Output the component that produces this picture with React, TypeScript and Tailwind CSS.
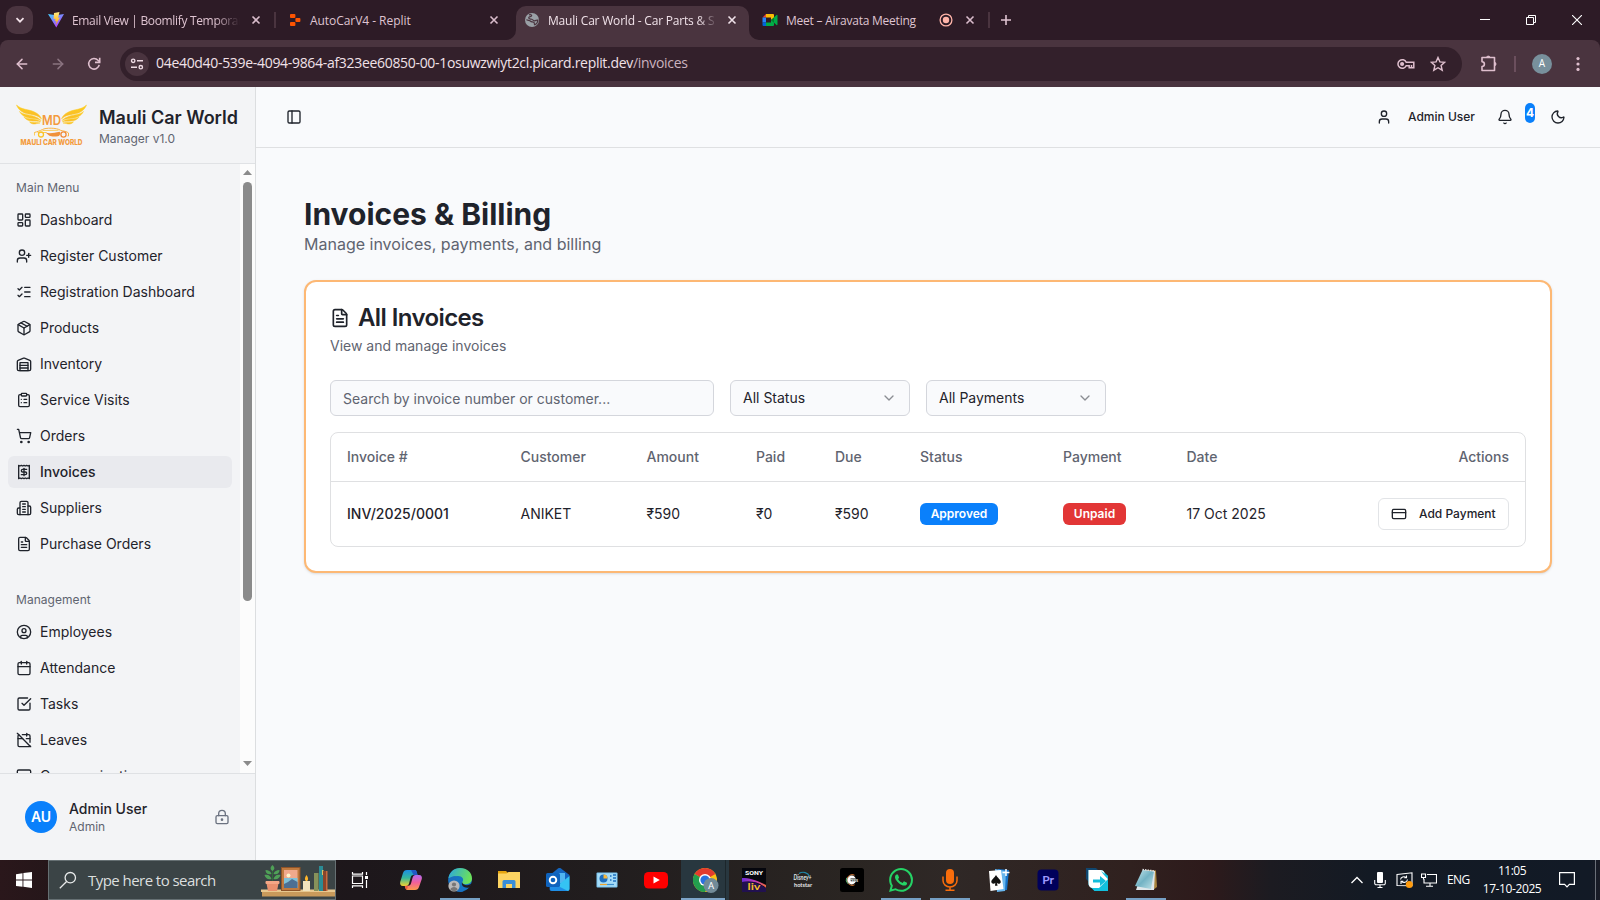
import type { ReactNode } from "react";
import {
  ArrowLeft,
  ArrowRight,
  Bell,
  Calendar,
  CalendarOff,
  ChevronDown,
  ClipboardList,
  CreditCard,
  FileText,
  LayoutDashboard,
  ListChecks,
  LockKeyhole,
  MessageSquare,
  Moon,
  Package,
  PanelLeft,
  ShoppingCart,
  SquareCheckBig,
  User,
  UserPlus,
} from "lucide-react";

/* ---------- shared ---------- */

function Stroke({ children, className = "size-4", width = 2 }: { children: ReactNode; className?: string; width?: number }) {
  return (
    <svg
      viewBox="0 0 24 24"
      fill="none"
      stroke="currentColor"
      strokeWidth={width}
      strokeLinecap="round"
      strokeLinejoin="round"
      className={`shrink-0 ${className}`}
    >
      {children}
    </svg>
  );
}

const WarehouseIcon = () => (
  <Stroke>
    <path d="M22 8.35V20a2 2 0 0 1-2 2H4a2 2 0 0 1-2-2V8.35A2 2 0 0 1 3.26 6.5l8-3.2a2 2 0 0 1 1.48 0l8 3.2A2 2 0 0 1 22 8.35Z" />
    <path d="M6 18h12" />
    <path d="M6 14h12" />
    <rect width="12" height="12" x="6" y="10" />
  </Stroke>
);

const BuildingIcon = () => (
  <Stroke>
    <path d="M6 22V4a2 2 0 0 1 2-2h8a2 2 0 0 1 2 2v18Z" />
    <path d="M6 12H4a2 2 0 0 0-2 2v6a2 2 0 0 0 2 2h2" />
    <path d="M18 9h2a2 2 0 0 1 2 2v9a2 2 0 0 1-2 2h-2" />
    <path d="M10 6h4M10 10h4M10 14h4M10 18h4" />
  </Stroke>
);

const ReceiptIcon = () => (
  <Stroke>
    <path d="M4 2v20l2-1 2 1 2-1 2 1 2-1 2 1 2-1 2 1V2l-2 1-2-1-2 1-2-1-2 1-2-1-2 1Z" />
    <path d="M16 8h-6a2 2 0 1 0 0 4h4a2 2 0 1 1 0 4H8" />
    <path d="M12 17.5v-11" />
  </Stroke>
);

const EmployeeIcon = () => (
  <Stroke>
    <circle cx="12" cy="12" r="10" />
    <circle cx="12" cy="10" r="3" />
    <path d="M7 20.662V19a2 2 0 0 1 2-2h6a2 2 0 0 1 2 2v1.662" />
  </Stroke>
);

/* ---------- browser window ---------- */

function CloseX({ bright = false }: { bright?: boolean }) {
  return (
    <svg viewBox="0 0 12 12" className={bright ? "size-3 shrink-0 text-[#f0e2e9]" : "size-3 shrink-0 text-[#d9bccb]"}>
      <path d="M2.5 2.5l7 7M9.5 2.5l-7 7" stroke="currentColor" strokeWidth="1.6" fill="none" />
    </svg>
  );
}

const ViteIcon = () => (
  <svg viewBox="0 0 16 16" className="size-4 shrink-0">
    <defs>
      <linearGradient id="vite" x1="0" y1="0" x2="0.7" y2="1">
        <stop offset="0" stopColor="#41d1ff" />
        <stop offset="1" stopColor="#bd34fe" />
      </linearGradient>
      <linearGradient id="bolt" x1="0" y1="0" x2="0" y2="1">
        <stop offset="0" stopColor="#ffea83" />
        <stop offset="1" stopColor="#ffa800" />
      </linearGradient>
    </defs>
    <path d="M0 2l8 1.2L16 2 8.3 15.6z" fill="url(#vite)" />
    <path d="M11.5 0L6 1.1 5.6 7l1.9-.3-.6 2.6 1.6-.4-.9 4L12 5.4l-1.9.3z" fill="url(#bolt)" />
  </svg>
);

const ReplitIcon = () => (
  <svg viewBox="0 0 16 16" className="size-4 shrink-0" fill="#fd5402">
    <rect x="3" y="2" width="5.4" height="4" rx="0.9" />
    <rect x="8.4" y="6" width="5" height="4" rx="0.9" />
    <rect x="3" y="10" width="5.4" height="4" rx="0.9" />
  </svg>
);

const GlobeIcon = () => (
  <svg viewBox="0 0 16 16" className="size-4 shrink-0">
    <circle cx="8" cy="8" r="7" fill="#9aa0a6" />
    <path d="M5 2.9c2.300-.6 3.200.3 2.300 1.200-.7.8-2.600.3-2.600 1.700 0 1.400 1.700 1.100 3 1.500 1.600.5 1.300 1.700 3 1.500 1.300-.1 1.700-1 3.200-.8-.1 2.300-1.500 4-3.200 4.800-.8-.9.100-2-.9-2.600-1.200-.7-2.700 0-3.300-1.100C5.800 7.900 3.600 8.700 2.400 7.600" fill="none" stroke="#4a343f" strokeWidth="1.200" />
  </svg>
);

const MeetIcon = () => (
  <svg viewBox="0 0 16 16" className="size-4 shrink-0">
    <path d="M.5 5.500 4 2v3.500z" fill="#ea4335" />
    <path d="M4 2h7a1 1 0 0 1 1 1v3.200L9 8V5.500H4z" fill="#fbbc04" />
    <path d="M.5 5.500H4v5H.5z" fill="#2684fc" />
    <path d="M.5 10.500H4V14H1.500a1 1 0 0 1-1-1z" fill="#0066da" />
    <path d="M4 10.500h5V8l3 2.500V13a1 1 0 0 1-1 1H4z" fill="#00ac47" />
    <path d="M9 8l5.500-5c.5-.4 1-.1 1 .5v9c0 .6-.5.9-1 .5z" fill="#00ac47" />
    <path d="M9 8l3-2.600v5.200z" fill="#00832d" />
  </svg>
);

function TabStrip() {
  return (
    <div className="flex h-10 w-full items-center bg-[#2d1b26] text-[12px] text-[#dfc4d1]">
      <div className="ml-[6px] flex h-7 w-[27px] items-center justify-center rounded-[10px] bg-[#4a343f]">
        <svg viewBox="0 0 10 10" className="size-[10px]">
          <path d="M1.500 3.200 5 6.700l3.500-3.500" fill="none" stroke="#f3e3ea" strokeWidth="1.700" />
        </svg>
      </div>
      <div className="flex w-[241px] items-center pl-[15px] pr-3">
        <ViteIcon />
        <span className="ml-2 w-[168px] whitespace-nowrap pt-[2px] tracking-[-0.330px] [mask-image:linear-gradient(to_right,black_85%,transparent)]">
          Email View | Boomlify Temporar
        </span>
        <span className="ml-auto flex"><CloseX /></span>
      </div>
      <div className="h-4 w-[2px] bg-[#4a343f]" />
      <div className="flex w-[240px] items-center pl-[11px] pr-4">
        <ReplitIcon />
        <span className="ml-[7px] whitespace-nowrap pt-[2px] tracking-[-0.050px]">AutoCarV4 - Replit</span>
        <span className="ml-auto flex"><CloseX /></span>
      </div>
      <div className="relative mt-[6px] flex h-[34px] w-[233px] items-center rounded-t-[10px] bg-[#4a343f] pb-[6px] pl-2 pr-[11px] text-[#f0e2e9]">
        <svg viewBox="0 0 10 10" className="absolute -left-[10px] bottom-0 size-[10px]">
          <path d="M10 0v10H0A10 10 0 0 0 10 0z" fill="#4a343f" />
        </svg>
        <svg viewBox="0 0 10 10" className="absolute -right-[10px] bottom-0 size-[10px]">
          <path d="M0 0v10h10A10 10 0 0 1 0 0z" fill="#4a343f" />
        </svg>
        <GlobeIcon />
        <span className="ml-2 w-[170px] whitespace-nowrap pt-[2px] tracking-[-0.200px] [mask-image:linear-gradient(to_right,black_88%,transparent)]">
          Mauli Car World - Car Parts &amp; S
        </span>
        <span className="ml-auto flex"><CloseX bright /></span>
      </div>
      <div className="flex w-[239px] items-center pl-[13px] pr-3">
        <MeetIcon />
        <span className="ml-[8px] whitespace-nowrap pt-[2px] tracking-[-0.230px]">Meet – Airavata Meeting</span>
        <svg viewBox="0 0 14 14" className="ml-auto size-[14px]">
          <circle cx="7" cy="7" r="5.900" fill="none" stroke="#ffb4a9" strokeWidth="1.300" />
          <circle cx="7" cy="7" r="3.200" fill="#ffb4a9" />
        </svg>
        <span className="ml-[11px] flex"><CloseX /></span>
      </div>
      <div className="h-4 w-[2px] bg-[#4a343f]" />
      <svg viewBox="0 0 12 12" className="ml-[10px] size-3">
        <path d="M6 1v10M1 6h10" stroke="#dfc4d1" strokeWidth="1.600" />
      </svg>
      <div className="ml-auto flex">
        <div className="flex w-[46px] items-center justify-center">
          <svg viewBox="0 0 10 10" className="size-[10px]"><path d="M0 4.500h10" stroke="#fff" /></svg>
        </div>
        <div className="flex w-[46px] items-center justify-center">
          <svg viewBox="0 0 10 10" className="size-[10px]" fill="none" stroke="#fff">
            <path d="M.5 2.500h7v7h-7z" />
            <path d="M2.500 2.500v-2h7v7h-2" />
          </svg>
        </div>
        <div className="flex w-[46px] items-center justify-center">
          <svg viewBox="0 0 10 10" className="size-[10px]"><path d="M0 0l10 10M10 0L0 10" stroke="#fff" strokeWidth="1.100" /></svg>
        </div>
      </div>
    </div>
  );
}

function Toolbar() {
  return (
    <div className="bg-[#2d1b26]">
      <div className="flex h-[47px] items-center rounded-t-lg bg-[#4a343f] text-[#dfbfce]">
        <ArrowLeft className="ml-[14px] size-4" strokeWidth={2.300} />
        <ArrowRight className="ml-5 size-4 text-[#8b7480]" strokeWidth={2.300} />
        <svg viewBox="0 0 16 16" className="ml-5 size-4" fill="none" stroke="currentColor" strokeWidth="1.600">
          <path d="M13.200 8.800A5.300 5.300 0 1 1 12 4.300L13.800 6" />
          <path d="M13.700 1.700v4.700H9" />
        </svg>
        <div className="ml-[18px] flex h-[34px] w-[1342px] items-center rounded-full bg-[#33202b] pl-[5px] pr-4">
          <div className="flex size-6 items-center justify-center rounded-full bg-[#4a343f]">
            <svg viewBox="0 0 14 14" className="size-[14px]" fill="none" stroke="#efdbe4" strokeWidth="1.400">
              <circle cx="3.200" cy="3.800" r="1.700" />
              <path d="M7 3.800h6M1 10.200h6" />
              <circle cx="10.800" cy="10.200" r="1.700" />
            </svg>
          </div>
          <span className="ml-[7px] whitespace-nowrap pb-[2px] text-[14px] tracking-[-0.310px] text-[#f1e1e8]">
            04e40d40-539e-4094-9864-af323ee60850-00-1osuwzwiyt2cl.picard.replit.dev
            <span className="text-[#cbb3bf]">/invoices</span>
          </span>
          <svg viewBox="0 0 18 12" className="ml-auto h-3 w-[18px]" fill="none" stroke="currentColor" strokeWidth="1.500">
            <path d="M9.200 4.300A4.300 4.300 0 1 0 9.200 7.700h3v2h4.600V4.300z" />
            <circle cx="5.100" cy="6" r="1.300" fill="currentColor" />
            <path d="M14.500 9.700V7" />
          </svg>
          <svg viewBox="0 0 16 16" className="ml-[15px] size-4" fill="none" stroke="currentColor" strokeWidth="1.400">
            <path d="M8 1.500l1.900 4.400 4.800.4-3.600 3.200 1.100 4.700L8 11.700l-4.200 2.500 1.100-4.700L1.300 6.300l4.800-.4z" />
          </svg>
        </div>
        <svg viewBox="0 0 18 18" className="ml-[18px] size-[18px]" fill="none" stroke="currentColor" strokeWidth="1.600">
          <path d="M2 2.500h12.500v13H2v-4a2.300 2.300 0 0 0 0-4.800z" strokeLinejoin="round" />
          <path d="M6.500 2.200a1.900 1.700 0 0 1 3.600 0zM14.800 7.200a1.800 1.900 0 0 1 0 3.600z" fill="currentColor" strokeWidth="0.800" />
        </svg>
        <div className="ml-4 h-4 w-[2px] bg-[#6b4f5d]" />
        <div className="ml-4 flex size-5 items-center justify-center rounded-full bg-[#78909c] text-[10px] text-white">A</div>
        <svg viewBox="0 0 4 16" className="ml-6 h-4 w-1" fill="currentColor">
          <circle cx="2" cy="2.600" r="1.600" />
          <circle cx="2" cy="8" r="1.600" />
          <circle cx="2" cy="13.400" r="1.600" />
        </svg>
      </div>
    </div>
  );
}

/* ---------- application sidebar ---------- */

const Wing = () => (
  <>
    <path d="M0 1c5 5 12 4 18 7 4 2 6 4 7 7-4-4-8-4-13-5C6 9 2 6 0 1z" />
    <path d="M3 7.500c4 3.500 9 3 13.500 4.500 4 1.300 6.500 2.500 8 4.500-4-2-7-1.800-11.500-2.500C8.500 13.300 5 11.500 3 7.500z" />
    <path d="M7.500 13.200c3.500 1.800 7 1.500 10.500 2 3 .5 4.800 1.200 6.200 2.600-3-.8-5.500-.3-8.800-.7-3.500-.5-6-1.500-7.900-3.900z" />
    <path d="M13 17.800c3 1 6 .3 10.500 1.200-3 .2-4.500 1.200-6.500 1-2-.2-3.200-1-4-2.200z" />
  </>
);

function Logo() {
  return (
    <svg viewBox="0 0 70 42" className="h-[42px] w-[71px] shrink-0 overflow-visible">
      <defs>
        <linearGradient id="wing" x1="0" y1="0" x2="0" y2="1">
          <stop offset="0" stopColor="#fcd21c" />
          <stop offset="1" stopColor="#f9b42c" />
        </linearGradient>
      </defs>
      <g fill="url(#wing)" stroke="#fcc927" strokeWidth="0.500"><Wing /></g>
      <g fill="url(#wing)" stroke="#fcc927" strokeWidth="0.500" transform="translate(70 0) scale(-1 1)"><Wing /></g>
      <text x="35" y="20.500" textAnchor="middle" fontFamily="Inter, sans-serif" fontSize="12.500" fontWeight="600" fill="#f39a3d" textLength="19" lengthAdjust="spacingAndGlyphs">MD</text>
      <path d="M18 28.500c3-1 5-1.500 8-3 3-1.800 14-2 18 .8 3 .9 6.500 1 8 2.700v3h-1" fill="none" stroke="#f9b447" strokeWidth="1" />
      <path d="M18 28v3.500M21 28.500h9M26 26.500l16-.2" fill="none" stroke="#fbc84f" strokeWidth="0.900" />
      <circle cx="24.500" cy="30.500" r="2.500" fill="none" stroke="#fbc424" strokeWidth="1.300" />
      <circle cx="47" cy="30.500" r="2.600" fill="none" stroke="#ef8b3a" strokeWidth="1.300" />
      <path d="M29 28.500c5 1.500 9 0 14-.8 1.500 1 .8 4-1.500 4.500-4 .8-7 .3-9-.8z" fill="#f0913a" />
      <text x="35" y="40.500" textAnchor="middle" fontFamily="Inter, sans-serif" fontSize="7.800" fontWeight="800" fill="#f49b3c" textLength="62" lengthAdjust="spacingAndGlyphs">MAULI CAR WORLD</text>
    </svg>
  );
}

function NavItem({ icon, label, active = false }: { icon: ReactNode; label: string; active?: boolean }) {
  return (
    <div className={`flex h-8 shrink-0 items-center gap-2 rounded-md px-2 text-sm ${active ? "bg-[#e9eaee] font-medium" : ""}`}>
      {icon}
      <span className="whitespace-nowrap">{label}</span>
    </div>
  );
}

function NavGroup({ title, children }: { title: string; children: ReactNode }) {
  return (
    <div className="flex flex-col p-2">
      <div className="flex h-8 items-center px-2 text-xs tracking-[0.050px] text-[#5f6470]">{title}</div>
      <div className="flex flex-col gap-1">{children}</div>
    </div>
  );
}

function Sidebar() {
  return (
    <aside className="flex w-64 shrink-0 flex-col border-r border-[#dcdee0] bg-[#f3f4f6]">
      <div className="flex h-[77px] shrink-0 items-center gap-3 border-b border-[#e0e2e5] px-4">
        <Logo />
        <div className="whitespace-nowrap">
          <div className="text-lg font-semibold leading-7">Mauli Car World</div>
          <div className="-mt-[1px] text-xs text-[#5f6470]">Manager v1.0</div>
        </div>
      </div>
      <div className="flex h-[609px] shrink-0">
        <div className="flex h-full w-60 flex-col gap-2 overflow-hidden">
          <NavGroup title="Main Menu">
            <NavItem icon={<LayoutDashboard className="size-4" />} label="Dashboard" />
            <NavItem icon={<UserPlus className="size-4" />} label="Register Customer" />
            <NavItem icon={<ListChecks className="size-4" />} label="Registration Dashboard" />
            <NavItem icon={<Package className="size-4" />} label="Products" />
            <NavItem icon={<WarehouseIcon />} label="Inventory" />
            <NavItem icon={<ClipboardList className="size-4" />} label="Service Visits" />
            <NavItem icon={<ShoppingCart className="size-4" />} label="Orders" />
            <NavItem icon={<ReceiptIcon />} label="Invoices" active />
            <NavItem icon={<BuildingIcon />} label="Suppliers" />
            <NavItem icon={<FileText className="size-4" />} label="Purchase Orders" />
          </NavGroup>
          <NavGroup title="Management">
            <NavItem icon={<EmployeeIcon />} label="Employees" />
            <NavItem icon={<Calendar className="size-4" />} label="Attendance" />
            <NavItem icon={<SquareCheckBig className="size-4" />} label="Tasks" />
            <NavItem icon={<CalendarOff className="size-4" />} label="Leaves" />
            <NavItem icon={<MessageSquare className="size-4" />} label="Communication" />
          </NavGroup>
        </div>
        <div className="flex h-full w-[15px] flex-col items-center bg-[#fcfcfc] pb-[7px] pt-[6px]">
          <svg viewBox="0 0 9 5" className="h-[5px] w-[9px]" fill="#8b8b8b"><path d="M4.500 0 9 5H0z" /></svg>
          <div className="mt-[7px] h-[419px] w-[9px] rounded-full bg-[#8b8b8b]" />
          <svg viewBox="0 0 9 5" className="mt-auto h-[5px] w-[9px]" fill="#8b8b8b"><path d="M4.500 5 9 0H0z" /></svg>
        </div>
      </div>
      <div className="flex flex-1 items-center border-t border-[#dfe1e4] pl-[25px] pr-[25px]">
        <div className="flex size-8 items-center justify-center rounded-full bg-[#0a80fb] text-sm font-semibold text-white">AU</div>
        <div className="ml-3 pt-[2px]">
          <div className="text-sm font-medium leading-[18px]">Admin User</div>
          <div className="text-xs leading-[18px] text-[#5f6470]">Admin</div>
        </div>
        <LockKeyhole className="ml-auto size-4 text-[#6b7280]" />
      </div>
    </aside>
  );
}

/* ---------- invoices page ---------- */

function SelectBox({ label }: { label: string }) {
  return (
    <div className="flex h-9 w-[180px] items-center justify-between rounded-md border border-[#d4d6dc] bg-[#f9fafc] px-3 text-sm">
      <span>{label}</span>
      <ChevronDown className="size-4 opacity-50" />
    </div>
  );
}

function Badge({ children, tone }: { children: ReactNode; tone: "blue" | "red" }) {
  return (
    <span
      className={`flex h-[22px] items-center justify-center rounded-md text-xs font-semibold text-white ${
        tone === "blue" ? "w-[78px] bg-[#0a80fb]" : "w-[63px] bg-[#e23636]"
      }`}
    >
      {children}
    </span>
  );
}

function InvoiceTable() {
  return (
    <div className="mt-4 h-[115px] rounded-lg border border-[#dfe0e2]">
      <table className="w-full table-fixed border-separate border-spacing-0 text-left text-sm">
        <colgroup>
          <col className="w-[173.5px]" />
          <col className="w-[126px]" />
          <col className="w-[109.5px]" />
          <col className="w-[79px]" />
          <col className="w-[85px]" />
          <col className="w-[143px]" />
          <col className="w-[123.5px]" />
          <col />
          <col className="w-[180px]" />
        </colgroup>
        <thead>
          <tr className="text-[#5f6470]">
            {["Invoice #", "Customer", "Amount", "Paid", "Due", "Status", "Payment", "Date"].map((h) => (
              <th key={h} className="h-[49px] border-b border-[#dfe0e2] px-4 py-0 font-medium">{h}</th>
            ))}
            <th className="h-[49px] border-b border-[#dfe0e2] px-4 py-0 text-right font-medium">Actions</th>
          </tr>
        </thead>
        <tbody>
          <tr className="h-16">
            <td className="px-4 font-medium">INV/2025/0001</td>
            <td className="px-4">ANIKET</td>
            <td className="px-4">₹590</td>
            <td className="px-4">₹0</td>
            <td className="px-4">₹590</td>
            <td className="px-4"><Badge tone="blue">Approved</Badge></td>
            <td className="px-4"><Badge tone="red">Unpaid</Badge></td>
            <td className="px-4">17 Oct 2025</td>
            <td className="px-4">
              <div className="flex justify-end">
                <button className="flex h-8 w-[131px] items-center gap-3 whitespace-nowrap rounded-md border border-[#e2e4e7] px-3 text-xs font-medium">
                  <CreditCard className="size-4 shrink-0" />
                  Add Payment
                </button>
              </div>
            </td>
          </tr>
        </tbody>
      </table>
    </div>
  );
}

function Main() {
  return (
    <main className="flex flex-1 flex-col bg-[#f9fafc]">
      <header className="flex h-[61px] shrink-0 items-center border-b border-[#dfe0e2] pl-[30px] pr-[34px]">
        <PanelLeft className="size-4" />
        <User className="ml-auto size-4" />
        <span className="ml-4 w-[67px] whitespace-nowrap text-xs font-medium">Admin User</span>
        <Bell className="ml-[22px] size-4" />
        <span className="mb-2 ml-3 flex h-5 w-[10px] items-center justify-center rounded-full bg-[#0a80fb] pb-px text-xs font-bold text-white">4</span>
        <Moon className="ml-[15px] size-4" />
      </header>
      <div className="p-12">
        <h1 className="text-3xl font-bold leading-9">Invoices &amp; Billing</h1>
        <p className="text-base text-[#5f6470]">Manage invoices, payments, and billing</p>
        <section className="mt-6 h-[293px] rounded-xl border-2 border-[#fdb874] bg-white p-6 shadow-sm">
          <div className="flex items-center gap-2 text-2xl font-semibold leading-6 tracking-tight">
            <FileText className="size-5" />
            All Invoices
          </div>
          <p className="mt-1.5 text-sm text-[#5f6470]">View and manage invoices</p>
          <div className="mt-6 flex gap-4">
            <div className="flex h-9 w-96 items-center rounded-md border border-[#d4d6dc] bg-[#f9fafc] px-3 pt-[2px] text-sm text-[#5f6470]">
              Search by invoice number or customer...
            </div>
            <SelectBox label="All Status" />
            <SelectBox label="All Payments" />
          </div>
          <InvoiceTable />
        </section>
      </div>
    </main>
  );
}

/* ---------- desktop taskbar ---------- */

const ShelfArt = () => (
  <svg viewBox="0 0 74 38" className="h-[38px] w-[74px]">
    <rect x="0" y="28.500" width="74" height="2.500" fill="#e8c88f" />
    <rect x="1" y="31" width="73" height="4.500" fill="#c99a5b" />
    <path d="M5 20h13l-2 10H7z" fill="#e8916e" />
    <rect x="4.500" y="20" width="14" height="3" rx="1" fill="#f3a786" />
    <path d="M11.500 20V8" stroke="#2f6b3a" strokeWidth="1.200" />
    <path d="M11.500 10c-3-2-2-4 0-6 2 2 3 4 0 6zM10.500 13c-4 1-6-1-6-4 3 0 5 1 6 4zM12.500 13c4 1 6-1 6-4-3 0-5 1-6 4zM10.500 18c-4 1-6-1-7-4 4-1 6 1 7 4zM12.500 18c4 1 6-1 7-4-4-1-6 1-7 4z" fill="#4fa057" />
    <rect x="20" y="6" width="19.500" height="24" fill="#8f5428" />
    <rect x="21" y="7" width="17.500" height="22" fill="#c07a3f" />
    <rect x="23" y="9" width="13.500" height="18" fill="#f0a98c" />
    <path d="M23 17h13.500v10H23z" fill="#7fc0d8" />
    <path d="M23 23l4-2 4-3 5.500 3v6H23z" fill="#4d6f93" />
    <circle cx="27.500" cy="14.500" r="2" fill="#fff3c8" />
    <rect x="42" y="20" width="7" height="10" fill="#f2e3bd" />
    <path d="M45.500 14c3 4 1 6 0 6s-3-2 0-6z" fill="#ffb52b" />
    <rect x="53" y="12" width="4.500" height="18" fill="#87915a" />
    <rect x="58" y="5" width="4" height="25" fill="#2b8c95" />
    <rect x="61" y="9" width="1.500" height="5" fill="#d8c267" />
    <rect x="62" y="10" width="4" height="20" fill="#8a452b" />
    <rect x="65" y="10" width="1.500" height="20" fill="#c96a3d" />
  </svg>
);

const CopilotIcon = () => (
  <svg viewBox="0 0 24 24" className="size-6">
    <defs>
      <linearGradient id="cpA" x1="0" y1="0" x2="0" y2="1"><stop offset="0" stopColor="#1b8de4" /><stop offset=".5" stopColor="#35b79b" /><stop offset="1" stopColor="#f2d32f" /></linearGradient>
      <linearGradient id="cpB" x1="0" y1="0" x2="0" y2="1"><stop offset="0" stopColor="#b56af0" /><stop offset=".5" stopColor="#f0609a" /><stop offset="1" stopColor="#fb9a4b" /></linearGradient>
    </defs>
    <path d="M8 2h7.500c1.500 0 2 1 2.500 3l.5 2h-4c-2 0-2.500 1-3 3l-1.300 5c-.5 2-1.500 3-3.200 3H4C1.500 18 .7 16 1.200 14L4 5c.7-2 1.700-3 4-3z" fill="url(#cpA)" />
    <path d="M16 22H8.500C7 22 6.500 21 6 19l-.3-1.200H9c2 0 2.700-1 3.200-3L13.500 10c.5-2 1.500-3 3.200-3H20c2.500 0 3.300 2 2.800 4L20 19c-.7 2-1.700 3-4 3z" fill="url(#cpB)" />
    <path d="M12 2h3.500c1.500 0 2 1 2.500 3l.5 2h-4z" fill="#2258c4" />
    <path d="M6 18l3 0-1 3.500C7 21.500 6.300 20 6 18z" fill="#ef5a3c" />
  </svg>
);

const EdgeIcon = () => (
  <svg viewBox="0 0 24 24" className="size-6">
    <defs>
      <linearGradient id="edA" x1="0" y1="0" x2="1" y2="0.300"><stop offset="0" stopColor="#2aa6e0" /><stop offset="1" stopColor="#6be05c" /></linearGradient>
    </defs>
    <circle cx="12" cy="12" r="11.800" fill="#1574c4" />
    <path d="M.5 10C1.500 4 6 0 12 0c7 0 12 4.500 12 10.500 0 4-3 5.700-6 5.700-3.500 0-4.300-1.500-3.500-2.500 1.700-2.500 0-5.700-4.500-5.700C5.500 8 2 10 .5 10z" fill="url(#edA)" />
    <path d="M14 14c0 2 2.500 3.200 5 3.200 2 0 3.500-.8 4.800-2.200-.5 2-1.500 3.500-2.500 4.500-5 1-8.300-1.500-7.300-5.500z" fill="#201c20" />
    <path d="M9 9c-4 6 0 13.500 7 14.500-9 2-16-4-15.300-12C3 8 7 7.500 9 9z" fill="#1b6fc0" />
    <circle cx="6" cy="18" r="5.600" fill="#b9b9b9" />
    <circle cx="6" cy="16.500" r="2.100" fill="#777" />
    <path d="M2.300 21.500c.7-3.500 6.700-3.500 7.400 0-2 2.300-5.400 2.300-7.400 0z" fill="#777" />
  </svg>
);

const ExplorerIcon = () => (
  <svg viewBox="0 0 24 24" className="size-6">
    <path d="M1 3h8l2 2h11v15H1z" fill="#e5a50f" />
    <path d="M1 5.500h8.500L11.500 4H23v16H1z" fill="#fcd462" />
    <path d="M5.500 20v-6.500a1.500 1.500 0 0 1 1.500-1.500h10a1.500 1.500 0 0 1 1.500 1.500V20H15v-4H9v4z" fill="#3a8ed8" />
  </svg>
);

const OutlookIcon = () => (
  <svg viewBox="0 0 24 24" className="size-6">
    <path d="M4 7l8-6.500c1-.6 2-.6 3 0L23.500 7v14a2 2 0 0 1-2 2H5.500a2 2 0 0 1-2-2z" fill="#1466c0" />
    <path d="M6 5h13v10H6z" fill="#50b5f0" />
    <path d="M23.500 8v13a2 2 0 0 1-2 2H6l5-5z" fill="#35c3f3" />
    <path d="M4 14l18 9H6a2 2 0 0 1-2-2z" fill="#1f8ee6" />
    <rect x="0" y="5" width="14" height="14" rx="1.500" fill="#0f63bd" />
    <circle cx="7" cy="12" r="3.300" fill="none" stroke="#fff" strokeWidth="1.900" />
  </svg>
);

const PanelIcon = () => (
  <svg viewBox="0 0 24 24" className="size-6">
    <rect x="1.500" y="4.500" width="21" height="15" rx="1" fill="#7cc8f3" />
    <rect x="2.500" y="5.500" width="19" height="13" fill="#a5dcf8" />
    <circle cx="8.500" cy="10.500" r="4" fill="#1d6fc0" />
    <path d="M8.500 10.500V6.500a4 4 0 0 1 4 4z" fill="#f6b73c" />
    <path d="M15 8h1.500M18 7h3M18 10h3M15 12h1.500M18 13h3" stroke="#1d6fc0" strokeWidth="1.300" />
    <path d="M5 16.500h7" stroke="#f0a52c" strokeWidth="1.200" />
    <path d="M12 16.500h7" stroke="#3c8fcd" strokeWidth="1.200" />
  </svg>
);

const YoutubeIcon = () => (
  <svg viewBox="0 0 24 24" className="size-6">
    <rect x="0" y="4" width="24" height="16.500" rx="4.500" fill="#fe0000" />
    <path d="M9.500 8.500l6.300 3.500-6.300 3.500z" fill="#fff" />
  </svg>
);

const ChromeIcon = () => (
  <svg viewBox="0 0 26 26" className="size-[26px] shrink-0">
    <circle cx="12" cy="13" r="12" fill="#fbc116" />
    <path d="M12 13 1.600 7A12 12 0 0 1 22.400 7z" fill="#e33b2e" />
    <path d="M12 13 1.600 7A12 12 0 0 0 12 25l5-9z" fill="#229e4e" />
    <circle cx="12" cy="13" r="6" fill="#fff" />
    <circle cx="12" cy="13" r="4.600" fill="#2a71e0" />
    <circle cx="18" cy="18.500" r="7.500" fill="#728b98" />
    <text x="18" y="22" textAnchor="middle" fontFamily="Roboto, sans-serif" fontSize="9.500" fill="#fff">A</text>
  </svg>
);

const SonyIcon = () => (
  <svg viewBox="0 0 24 24" className="size-6">
    <defs>
      <linearGradient id="sony" x1="0" y1="0" x2="1" y2="0"><stop offset="0" stopColor="#6c2bd9" /><stop offset=".6" stopColor="#c43bb0" /><stop offset="1" stopColor="#f06a3a" /></linearGradient>
    </defs>
    <rect width="24" height="24" fill="#05060d" />
    <path d="M0 10c8 0 14 2 24 7v3C16 13 8 13 0 14z" fill="url(#sony)" />
    <path d="M0 14c8-1 16 0 24 6v4H0z" fill="#21114f" />
    <text x="12" y="6.500" textAnchor="middle" fontFamily="Roboto, sans-serif" fontSize="5" fontWeight="700" fill="#fff" textLength="18" lengthAdjust="spacingAndGlyphs">SONY</text>
    <text x="12" y="22" textAnchor="middle" fontFamily="Lato, sans-serif" fontSize="10" fontWeight="700" fill="#f9bb2d" textLength="13" lengthAdjust="spacingAndGlyphs">liv</text>
  </svg>
);

const HotstarIcon = () => (
  <svg viewBox="0 0 24 24" className="size-6">
    <path d="M8 5.500c4-2.500 9-1 10.500 3" fill="none" stroke="#1f86a8" strokeWidth="1.200" />
    <text x="11.500" y="12" textAnchor="middle" fontFamily="Lato, sans-serif" fontSize="6.500" fontStyle="italic" fontWeight="700" fill="#dfe3e6" textLength="18" lengthAdjust="spacingAndGlyphs">Disney+</text>
    <text x="12" y="18.500" textAnchor="middle" fontFamily="Lato, sans-serif" fontSize="6.200" fontWeight="700" fill="#e6e6e6" textLength="18" lengthAdjust="spacingAndGlyphs">hotstar</text>
  </svg>
);

const ZeeIcon = () => (
  <svg viewBox="0 0 24 24" className="size-6">
    <rect width="24" height="24" rx="2.500" fill="#000" />
    <path d="M14.500 7.200A5.300 5.300 0 1 0 14.500 16.800" fill="none" stroke="#e6823a" strokeWidth="1" />
    <path d="M8 15.800a5.300 5.300 0 0 1-1.400-6" fill="none" stroke="#4ca870" strokeWidth="1" />
    <circle cx="11.700" cy="12" r="4.400" fill="#fff" />
    <path d="M10.500 10.500h7v3h-7z" fill="#000" />
    <text x="14" y="13.500" textAnchor="middle" fontFamily="Lato, sans-serif" fontSize="3.600" fontWeight="900" fill="#fff">ZEE5</text>
  </svg>
);

const WhatsappIcon = () => (
  <svg viewBox="0 0 24 24" className="size-6" fill="#25d366">
    <path d="M17.472 14.382c-.297-.149-1.758-.867-2.030-.967-.273-.099-.471-.148-.670.150-.197.297-.767.966-.940 1.164-.173.199-.347.223-.644.075-.297-.150-1.255-.463-2.390-1.475-.883-.788-1.480-1.761-1.653-2.059-.173-.297-.018-.458.130-.606.134-.133.298-.347.446-.520.149-.174.198-.298.298-.497.099-.198.050-.371-.025-.520-.075-.149-.669-1.612-.916-2.207-.242-.579-.487-.500-.669-.510-.173-.008-.371-.010-.570-.010-.198 0-.520.074-.792.372-.272.297-1.040 1.016-1.040 2.479 0 1.462 1.065 2.875 1.213 3.074.149.198 2.096 3.200 5.077 4.487.709.306 1.262.489 1.694.625.712.227 1.360.195 1.871.118.571-.085 1.758-.719 2.006-1.413.248-.694.248-1.289.173-1.413-.074-.124-.272-.198-.570-.347m-5.421 7.403h-.004a9.870 9.870 0 01-5.031-1.378l-.361-.214-3.741.982.998-3.648-.235-.374a9.860 9.860 0 01-1.510-5.260c.001-5.450 4.436-9.884 9.888-9.884 2.640 0 5.122 1.030 6.988 2.898a9.825 9.825 0 012.893 6.994c-.003 5.450-4.437 9.884-9.885 9.884m8.413-18.297A11.815 11.815 0 0012.050 0C5.495 0 .160 5.335.157 11.892c0 2.096.547 4.142 1.588 5.945L.057 24l6.305-1.654a11.882 11.882 0 005.683 1.448h.005c6.554 0 11.890-5.335 11.893-11.893a11.821 11.821 0 00-3.480-8.413z" />
  </svg>
);

const MicAppIcon = () => (
  <svg viewBox="0 0 24 24" className="size-6">
    <rect x="8" y="1" width="8" height="15" rx="4" fill="#f96d0c" />
    <path d="M5 8.500v4a7 6.500 0 0 0 14 0v-4M12 19v3M7.500 22.300h9" fill="none" stroke="#f96d0c" strokeWidth="1.500" />
  </svg>
);

const CardsIcon = () => (
  <svg viewBox="0 0 24 24" className="size-6">
    <path d="M11 1l11 1-2 20-8 1z" fill="#1673c9" />
    <path d="M8 1l11 2-1 20-8 1z" fill="#69b7ee" />
    <path d="M2 3l12-1 2.500 19L3.500 23z" fill="#fff" />
    <path d="M9 7c1.500 3 4.800 4.500 4.800 7 0 2-3 2.500-4 .8l.8 3H8l.3-3c-1 1.500-4 1-4-1C4.300 11.500 7.500 10 9 7z" fill="#111" />
    <path d="M19 1v7M15.500 4.500h7" stroke="#fff" strokeWidth="1.500" />
  </svg>
);

const PremiereIcon = () => (
  <svg viewBox="0 0 24 24" className="size-6">
    <rect x="1.500" y="1.500" width="21" height="21" rx="4" fill="#00005b" />
    <text x="12.200" y="15.700" textAnchor="middle" fontFamily="Lato, sans-serif" fontSize="12" fontWeight="700" fill="#9d9aff">Pr</text>
  </svg>
);

const ShareAppIcon = () => (
  <svg viewBox="0 0 24 24" className="size-6">
    <path d="M1 0h10l3 3v13H6L1 11z" fill="#10466f" />
    <path d="M3.500 2H17l6 6v15H9.500l-6-6z" fill="#12c0de" />
    <path d="M3.500 2H15c4 0 5 3 5 5.500L23 11l-9 9H8c-3 0-4.500-2-4.500-5z" fill="#fff" />
    <path d="M16 3l7 5v3l-4-4zM23 12v11H10l-3-3h8z" fill="#12c0de" />
    <path d="M8 11.500h7V8l6 5-6 5v-3.500H8z" fill="#14bddb" />
  </svg>
);

const NotepadIcon = () => (
  <svg viewBox="0 0 24 24" className="size-6">
    <defs>
      <linearGradient id="note" x1="0" y1="0" x2="1" y2="1"><stop offset="0" stopColor="#c8e7ee" /><stop offset=".5" stopColor="#73b3c4" /><stop offset="1" stopColor="#bfe2e8" /></linearGradient>
    </defs>
    <path d="M9 2l13 .5L23 19l-4 3z" fill="#a9853f" />
    <path d="M9 2l12 1-1 19H2z" fill="#dfe7ea" />
    <path d="M8.500 2L20 3.500 17 21 1 18z" fill="url(#note)" />
    <path d="M8.500 1.500L20.500 3" stroke="#ddd" strokeWidth="1.500" strokeDasharray="1.500 1" />
  </svg>
);

function TaskApp({ children, open = false }: { children: ReactNode; open?: boolean }) {
  return (
    <div className="flex h-10 w-[49px] flex-col items-center">
      <div className="flex h-[38px] items-center pt-[2px]">{children}</div>
      <div className={open ? "h-[2px] w-10 bg-[#76a0c4]" : "h-[2px] w-10"} />
    </div>
  );
}

function Taskbar() {
  return (
    <footer className="flex h-10 w-full shrink-0 items-center overflow-hidden bg-[linear-gradient(to_right,#2a171b_0,#241619_60px,#1d171b_360px,#211d1e_600px,#2a2522_850px,#2f2826_950px,#30211f_1130px,#2d1a1b_1210px,#1c1b21_1270px,#131a24_1370px,#121a26_1590px,#1a1c26_1600px)] text-white">
      <div className="flex w-12 justify-center">
        <svg viewBox="0 0 16 16" className="size-4" fill="#fff">
          <path d="M0 2.200 6.500 1.300v6.300H0zM7.400 1.100 16 0v7.600H7.400zM0 8.500h6.500v6.300L0 13.900zM7.400 8.500H16V16l-8.600-1.200z" />
        </svg>
      </div>
      <div className="flex h-10 w-72 items-center border border-[#667073] bg-[#3b4446] pl-[10px]">
        <svg viewBox="0 0 18 18" className="size-[18px]" fill="none" stroke="#e8eaea" strokeWidth="1.300">
          <circle cx="11.300" cy="6.700" r="5.200" />
          <path d="M7.600 10.500.8 17.200" />
        </svg>
        <span className="ml-[11px] whitespace-nowrap text-[15px] tracking-[-0.550px] text-[#dcdfdf]">Type here to search</span>
        <span className="ml-auto flex"><ShelfArt /></span>
      </div>
      <div className="flex w-[50px] justify-center pr-[2px]">
        <svg viewBox="0 0 18 18" className="size-[18px]" fill="none" stroke="#fff" strokeWidth="1.200">
          <path d="M1.500 5h10v7.500h-10zM1.500 1v2.200h10V1M1.500 17v-2.200h10V17M15.500 1v3M15.500 9v8" />
          <path d="M14 5h3v3h-3z" fill="#fff" stroke="none" />
        </svg>
      </div>
      <div className="flex">
        <TaskApp><CopilotIcon /></TaskApp>
        <TaskApp open><EdgeIcon /></TaskApp>
        <TaskApp><ExplorerIcon /></TaskApp>
        <TaskApp><OutlookIcon /></TaskApp>
        <TaskApp><PanelIcon /></TaskApp>
        <TaskApp><YoutubeIcon /></TaskApp>
        <div className="flex w-[49px] pl-[1px]">
          <div className="flex h-10 w-11 flex-col items-center border-b-2 border-[#7da5c8] bg-[#28373f] pl-[6px] pt-[7px]">
            <ChromeIcon />
          </div>
          <div className="h-10 w-1 border-l border-[#1c262b] bg-[#28373f]" />
        </div>
        <TaskApp><SonyIcon /></TaskApp>
        <TaskApp><HotstarIcon /></TaskApp>
        <TaskApp><ZeeIcon /></TaskApp>
        <TaskApp open><WhatsappIcon /></TaskApp>
        <TaskApp open><MicAppIcon /></TaskApp>
        <TaskApp><CardsIcon /></TaskApp>
        <TaskApp><PremiereIcon /></TaskApp>
        <TaskApp><ShareAppIcon /></TaskApp>
        <TaskApp open><NotepadIcon /></TaskApp>
      </div>
      <div className="ml-auto flex h-10 items-center">
        <svg viewBox="0 0 12 8" className="h-2 w-3"><path d="M.5 7 6 1.500 11.500 7" fill="none" stroke="#fff" strokeWidth="1.300" /></svg>
        <svg viewBox="0 0 12 16" className="ml-[11px] h-4 w-3">
          <rect x="3" y="0" width="6" height="11" rx="1" fill="#fff" />
          <path d="M.7 8v3.300a1.500 1.500 0 0 0 1.500 1.500h7.600a1.500 1.500 0 0 0 1.500-1.500V8M6 13v2.500M3.500 15.500h5" fill="none" stroke="#fff" strokeWidth="1.100" />
        </svg>
        <svg viewBox="0 0 18 16" className="ml-[10px] h-4 w-[18px]" fill="none" stroke="#fff" strokeWidth="1.100">
          <path d="M1 2.500l15-1.700v13L1 13.500z" />
          <path d="M4.500 7.500c.5-2.500 3.500-3.500 5.700-2M10.500 3.500v2.200H8.300M11.500 7.500c-.5 2.800-3.700 3.800-6 2M5 12V9.300h2.300" />
          <circle cx="13.300" cy="12.500" r="3.500" fill="#ff9b0d" stroke="none" />
        </svg>
        <svg viewBox="0 0 16 14" className="ml-[7px] h-[14px] w-4" fill="none" stroke="#fff" strokeWidth="1.100">
          <path d="M6 1.500h9.500v8.500H3V6M9 10v3M5 13.300h7" />
          <path d="M.5 1h4v3.500h-4zM2.500 4.500v2" />
        </svg>
        <span className="ml-[10px] w-[23px] whitespace-nowrap text-[12px] tracking-[-0.600px]">ENG</span>
        <div className="ml-[10px] flex w-[64px] flex-col items-center whitespace-nowrap text-[12px] leading-[18px] tracking-[-0.500px]">
          <span>11:05</span>
          <span className="tracking-[-0.400px]">17-10-2025</span>
        </div>
        <svg viewBox="0 0 16 16" className="ml-[15px] mr-[20px] size-4"><path d="M.6.600h14.800v11.800h-5L8 14.800l-2.400-2.400h-5z" fill="none" stroke="#fff" strokeWidth="1.200" /></svg>
        <div className="mr-[4px] h-10 w-px bg-[#6b7078]" />
      </div>
    </footer>
  );
}

export default function App() {
  return (
    <div className="flex h-[900px] w-[1600px] flex-col overflow-hidden font-['Open_Sans','Noto_Sans',sans-serif]">
      <TabStrip />
      <Toolbar />
      <div className="flex h-[773px] shrink-0 font-['Inter',sans-serif] text-[#1f232b]">
        <Sidebar />
        <Main />
      </div>
      <Taskbar />
    </div>
  );
}
